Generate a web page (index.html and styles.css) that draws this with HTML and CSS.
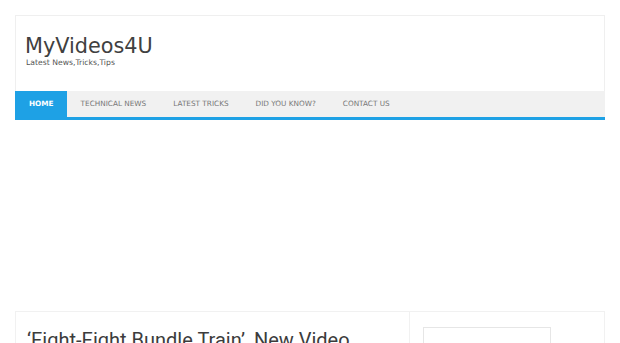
FILE: index.html
```html
<!DOCTYPE html>
<html>
<head>
<meta charset="utf-8">
<link rel="stylesheet" href="styles.css">
</head>
<body>
<div class="wrap">
  <header class="site-header">
    <div class="brand">
      <div class="site-title">MyVideos4U</div>
      <div class="tagline">Latest News,Tricks,Tips</div>
    </div>
    <nav class="nav">
      <a class="nav-item active">HOME</a>
      <a class="nav-item">TECHNICAL NEWS</a>
      <a class="nav-item">LATEST TRICKS</a>
      <a class="nav-item">DID YOU KNOW?</a>
      <a class="nav-item">CONTACT US</a>
    </nav>
  </header>
  <div class="ad-space"></div>
  <main class="content">
    <section class="posts">
      <h2 class="post-title">‘Eight-Eight Bundle Train’, New Video</h2>
    </section>
    <aside class="sidebar">
      <div class="widget"></div>
    </aside>
  </main>
</div>
</body>
</html>
```
FILE: styles.css
```css
html, body {
  margin: 0;
  padding: 0;
  background: #ffffff;
  overflow: hidden;
}
body {
  padding: 15px;
  font-family: "DejaVu Sans", sans-serif;
}
.wrap {
  width: 590px;
}
.site-header {
  border: 1px solid #efefef;
  border-bottom: none;
  background: #fff;
}
.brand {
  padding: 18px 9px 23px;
}
.site-title {
  font-size: 20.8px;
  line-height: 24px;
  color: #404040;
}
.tagline {
  font-size: 7.7px;
  line-height: 10px;
  color: #555;
  padding-left: 1px;
}
.nav {
  display: flex;
  height: 26px;
  background: #f1f1f1;
  border-bottom: 3px solid #1ea1e5;
  margin: 0 -1px;
}
.nav-item {
  display: block;
  padding: 0 13.5px;
  font-size: 7.3px;
  line-height: 26px;
  color: #777;
  white-space: nowrap;
}
.nav-item.active {
  background: #1ea1e5;
  color: #fff;
  font-weight: bold;
  padding: 0 13.5px 0 14px;
}
.ad-space {
  height: 191px;
}
.content {
  display: grid;
  grid-template-columns: 394px 1fr;
  border: 1px solid #f1f1f1;
  height: 60px;
}
.posts {
  border-right: 1px solid #f1f1f1;
  padding: 15px 10px 15px 11px;
}
.post-title {
  margin: 0;
  font-family: Roboto, sans-serif;
  font-weight: normal;
  font-size: 20px;
  line-height: 26px;
  color: #3c3c3c;
  white-space: nowrap;
}
.sidebar {
  padding: 15px 13px;
}
.widget {
  width: 126px;
  height: 40px;
  border: 1px solid #e6e6e6;
}
```
